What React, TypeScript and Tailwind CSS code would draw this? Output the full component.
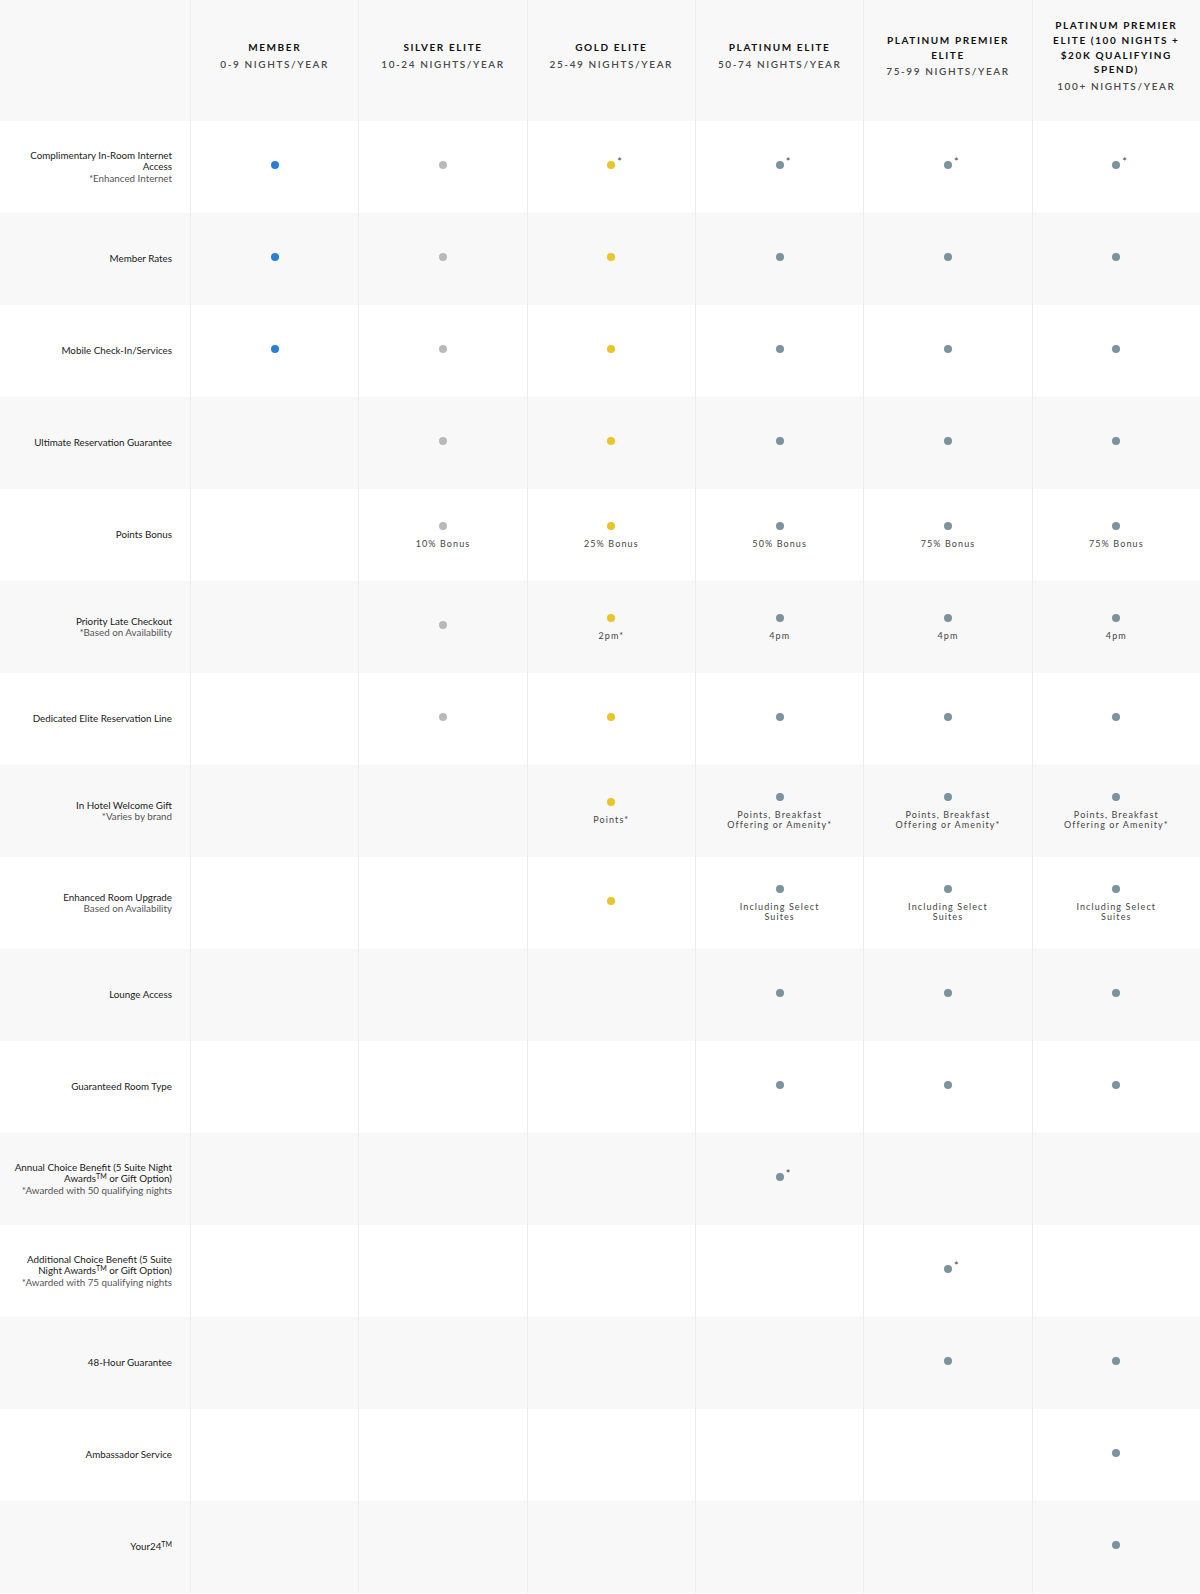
import React from 'react';

type Tier = 'member' | 'silver' | 'gold' | 'plat';

interface Cell {
  note?: string; // text under the dot
  star?: boolean; // little asterisk top right of dot
}

interface Benefit {
  label: React.ReactNode;
  sub?: string;
  cells: (Cell | null)[];
}

const TIERS: { title: string; nights: string; tier: Tier }[] = [
  { title: 'Member', nights: '0-9 Nights/Year', tier: 'member' },
  { title: 'Silver Elite', nights: '10-24 Nights/Year', tier: 'silver' },
  { title: 'Gold Elite', nights: '25-49 Nights/Year', tier: 'gold' },
  { title: 'Platinum Elite', nights: '50-74 Nights/Year', tier: 'plat' },
  { title: 'Platinum Premier Elite', nights: '75-99 Nights/Year', tier: 'plat' },
  { title: 'Platinum Premier Elite (100 Nights + $20K Qualifying Spend)', nights: '100+ Nights/Year', tier: 'plat' },
];

const DOT_COLOR: Record<Tier, string> = {
  member: 'bg-[#2a7fd4]',
  silver: 'bg-[#b9b9b9]',
  gold: 'bg-[#e9c42a]',
  plat: 'bg-[#7a939c]',
};

const d: Cell = {};
const ds: Cell = { star: true };
const _ = null;

const BENEFITS: Benefit[] = [
  { label: 'Complimentary In-Room Internet Access', sub: '*Enhanced Internet', cells: [d, d, ds, ds, ds, ds] },
  { label: 'Member Rates', cells: [d, d, d, d, d, d] },
  { label: 'Mobile Check-In/Services', cells: [d, d, d, d, d, d] },
  { label: 'Ultimate Reservation Guarantee', cells: [_, d, d, d, d, d] },
  {
    label: 'Points Bonus',
    cells: [_, { note: '10% Bonus' }, { note: '25% Bonus' }, { note: '50% Bonus' }, { note: '75% Bonus' }, { note: '75% Bonus' }],
  },
  {
    label: 'Priority Late Checkout',
    sub: '*Based on Availability',
    cells: [_, d, { note: '2pm*' }, { note: '4pm' }, { note: '4pm' }, { note: '4pm' }],
  },
  { label: 'Dedicated Elite Reservation Line', cells: [_, d, d, d, d, d] },
  {
    label: 'In Hotel Welcome Gift',
    sub: '*Varies by brand',
    cells: [
      _,
      _,
      { note: 'Points*' },
      { note: 'Points, Breakfast Offering or Amenity*' },
      { note: 'Points, Breakfast Offering or Amenity*' },
      { note: 'Points, Breakfast Offering or Amenity*' },
    ],
  },
  {
    label: 'Enhanced Room Upgrade',
    sub: 'Based on Availability',
    cells: [_, _, d, { note: 'Including Select Suites' }, { note: 'Including Select Suites' }, { note: 'Including Select Suites' }],
  },
  { label: 'Lounge Access', cells: [_, _, _, d, d, d] },
  { label: 'Guaranteed Room Type', cells: [_, _, _, d, d, d] },
  {
    label: (
      <>
        Annual Choice Benefit (5 Suite Night Awards<sup className="text-[7px]">TM</sup> or Gift Option)
      </>
    ),
    sub: '*Awarded with 50 qualifying nights',
    cells: [_, _, _, ds, _, _],
  },
  {
    label: (
      <>
        Additional Choice Benefit (5 Suite Night Awards<sup className="text-[7px]">TM</sup> or Gift Option)
      </>
    ),
    sub: '*Awarded with 75 qualifying nights',
    cells: [_, _, _, _, ds, _],
  },
  { label: '48-Hour Guarantee', cells: [_, _, _, _, d, d] },
  { label: 'Ambassador Service', cells: [_, _, _, _, _, d] },
  {
    label: (
      <>
        Your24<sup className="text-[7px]">TM</sup>
      </>
    ),
    cells: [_, _, _, _, _, d],
  },
];

const Dot: React.FC<{ tier: Tier; star?: boolean }> = ({ tier, star }) => (
  <span className="relative inline-block">
    <span className={`block w-2 h-2 rounded-full ${DOT_COLOR[tier]}`} />
    {star && <span className="absolute left-[10px] -top-[5px] text-[11px] leading-none text-[#444]">*</span>}
  </span>
);

const BenefitCell: React.FC<{ cell: Cell | null; tier: Tier; shaded: boolean }> = ({ cell, tier, shaded }) => (
  <div
    className={`h-[92px] border-l border-[#ececec] flex flex-col items-center justify-center ${
      shaded ? 'bg-[#f8f8f8]' : 'bg-white'
    } ${cell && !cell.note ? 'pb-1' : ''}`}
  >
    {cell && <Dot tier={tier} star={cell.star} />}
    {cell?.note && (
      <p className="mt-[9px] max-w-[106px] text-center text-[9px] leading-[10px] tracking-[1.1px] text-[#444]">
        {cell.note}
      </p>
    )}
  </div>
);

export default function App() {
  return (
    <div className="w-[1200px] bg-white font-['Lato','Liberation_Sans',sans-serif] text-[#1a1a1a]">
      <div className="grid grid-cols-[190px_repeat(6,minmax(0,1fr))]">
        {/* Header */}
        <div className="h-[121px] bg-[#f8f8f8]" />
        {TIERS.map(t => (
          <div
            key={t.title}
            className="h-[121px] bg-[#f8f8f8] border-l border-[#ececec] flex flex-col items-center justify-center px-5 pb-[9px] text-center"
          >
            <h3 className="text-[10px] leading-[14.7px] font-bold uppercase tracking-[1.6px] text-[#111]">{t.title}</h3>
            <p className="mt-[2px] text-[10px] leading-[15px] font-semibold uppercase tracking-[1.6px] text-[#4a4a4a]">
              {t.nights}
            </p>
          </div>
        ))}

        {/* Benefit rows */}
        {BENEFITS.map((b, i) => {
          const shaded = i % 2 === 1;
          return (
            <React.Fragment key={i}>
              <div
                className={`h-[92px] flex flex-col items-end justify-center pl-[10px] pr-[18px] text-right ${
                  shaded ? 'bg-[#f8f8f8]' : 'bg-white'
                }`}
              >
                <p className="text-[9.8px] leading-[11.5px] text-[#1a1a1a]">{b.label}</p>
                {b.sub && <p className="text-[9.8px] leading-[11.5px] text-[#555]">{b.sub}</p>}
              </div>
              {b.cells.map((c, j) => (
                <BenefitCell key={j} cell={c} tier={TIERS[j].tier} shaded={shaded} />
              ))}
            </React.Fragment>
          );
        })}
      </div>
    </div>
  );
}
